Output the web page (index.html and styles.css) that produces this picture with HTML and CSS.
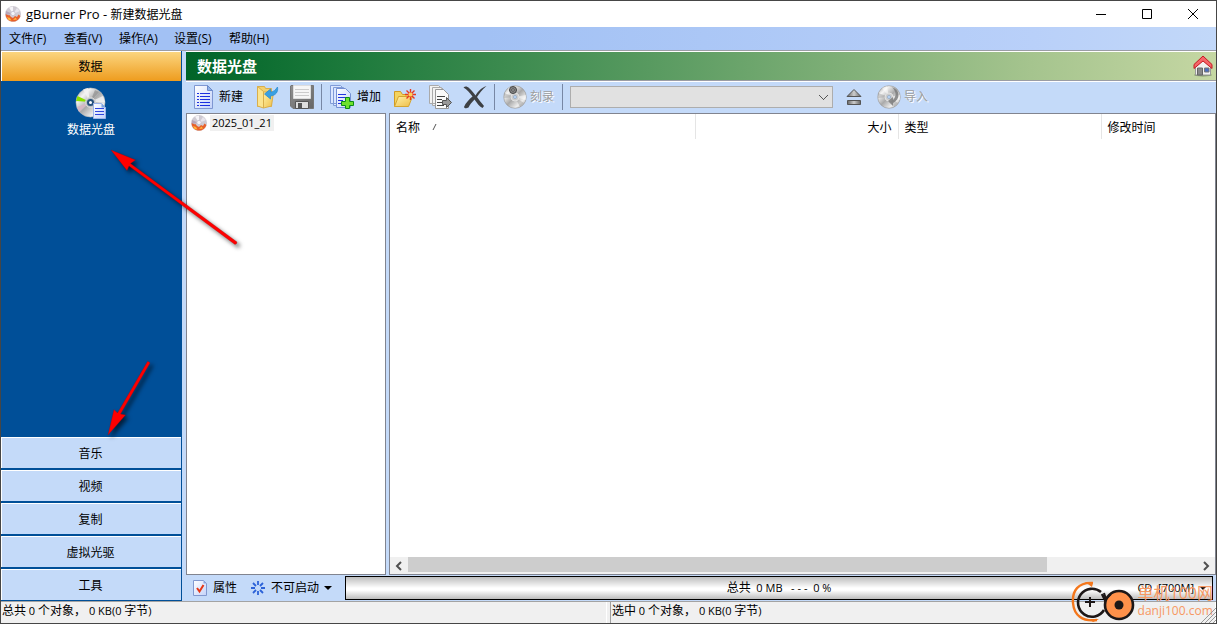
FILE: index.html
```html
<!DOCTYPE html>
<html lang="zh-CN">
<head>
<meta charset="utf-8">
<title>gBurner Pro - 新建数据光盘</title>
<link rel="stylesheet" href="styles.css">
</head>
<body>
<svg class="defs" aria-hidden="true">
  <defs>
    <linearGradient id="silver" x1="0" y1="0" x2="1" y2="1"><stop offset="0" stop-color="#999"/><stop offset=".25" stop-color="#f4f4f4"/><stop offset=".5" stop-color="#aaa"/><stop offset=".75" stop-color="#eee"/><stop offset="1" stop-color="#888"/></linearGradient>
    <linearGradient id="gold" x1="0" y1="0" x2="1" y2="1"><stop offset="0" stop-color="#fff2a8"/><stop offset="1" stop-color="#eebc45"/></linearGradient>
    <linearGradient id="paper" x1="0" y1="0" x2="1" y2="1"><stop offset="0" stop-color="#fff"/><stop offset="1" stop-color="#c3d2fa"/></linearGradient>
    <linearGradient id="metal" x1="0" y1="0" x2="1" y2="0"><stop offset="0" stop-color="#666"/><stop offset=".5" stop-color="#ccc"/><stop offset="1" stop-color="#666"/></linearGradient>
    <linearGradient id="cover" x1="0" y1="0" x2="1" y2="1"><stop offset="0" stop-color="#909090"/><stop offset="1" stop-color="#666"/></linearGradient>
    <symbol id="burn" viewBox="0 0 16 16">
      <circle cx="8" cy="8" r="7.600" fill="#cfcbd3" stroke="#c3bec8" stroke-width=".6"/>
      <path d="M8 8 4 1.600 8 .6z" fill="#f6f4f8"/><path d="M8 8 12 2l3 3z" fill="#e8e5ec"/>
      <path d="M8 8 1 5v4z" fill="#b7a5b8"/>
      <path d="M.6 8.500C1 7.500 3 10 4.500 9l1.500 2 2 1 2-2 2 1 1.500-2.500L15.400 10C14.500 13 12 15.600 8 15.600S1 13 .6 8.500z" fill="#e8602a"/>
      <path d="M2 11l3 1 1.500 2.500-3-.5zM8 14l2.500-2.500 1.500 2z" fill="#ffb83b"/>
      <circle cx="8" cy="7.500" r="2.200" fill="#f4f4f8" stroke="#c4bfcd" stroke-width=".8"/>
    </symbol>
    <symbol id="page" viewBox="0 0 24 24">
      <path d="M2.500.5h13l5 5v18h-18z" fill="url(#paper)" stroke="#7f97d2"/>
      <path d="M15.500.500v5h5z" fill="#8fb3e8" stroke="#6c8acb"/>
      <path d="M5 8.500h2m1 0h10M5 11.500h2m1 0h10M5 14.500h2m1 0h10M5 17.500h2m1 0h10M5 20.500h2m1 0h10" stroke="#1c2fe0" fill="none"/>
    </symbol>
    <symbol id="disc" viewBox="0 0 24 24">
      <circle cx="12" cy="12" r="11.300" fill="url(#silver)" stroke="#949494" stroke-width=".6"/>
      <path d="M12 12 5 3l5-2zM12 12l11-2v5z" fill="#fff" opacity=".5"/>
      <path d="M12 12 1 8v5zM12 12l5 10 4-4z" fill="#888" opacity=".35"/>
      <circle cx="12" cy="12" r="4" fill="#ccc" stroke="#e2e2e2"/><circle cx="12" cy="12" r="1.600" fill="#b9d4f5" stroke="#8aa2c0" stroke-width=".6"/>
    </symbol>
  </defs>
</svg>
<div class="window">
  <header class="titlebar">
    <svg class="icon16"><use href="#burn"/></svg>
    <h1 class="title"><span class="app-name">gBurner Pro - </span>新建数据光盘</h1>
    <div class="captions">
      <button class="caption" aria-label="最小化"><svg viewBox="0 0 12 12"><path d="M1 6.500h10" /></svg></button>
      <button class="caption" aria-label="最大化"><svg viewBox="0 0 12 12"><path d="M1.500 1.500h9v9h-9z"/></svg></button>
      <button class="caption" aria-label="关闭"><svg viewBox="0 0 12 12"><path d="M1 1l10 10M11 1 1 11"/></svg></button>
    </div>
  </header>
  <nav class="menubar">
    <button class="menu">文件(F)</button><button class="menu">查看(V)</button><button class="menu">操作(A)</button><button class="menu">设置(S)</button><button class="menu">帮助(H)</button>
  </nav>
  <div class="body">
    <aside class="sidebar">
      <button class="group active">数据</button>
      <div class="group-panel">
        <button class="launcher">
          <svg viewBox="0 0 32 32">
            <circle cx="15.500" cy="15.500" r="14.500" fill="url(#silver)" stroke="#bbb" stroke-width=".6"/>
            <path d="M15 15 8 2.500l5-1.500zM15 15 28 9l2 6z" fill="#f4f4f4" opacity=".8"/>
            <path d="M15 15 2.500 9 1 14z" fill="#8be000"/><path d="M15 15 4 25 2 20z" fill="#d5b7c4"/><path d="M15 15 20 3l4 2z" fill="#888" opacity=".6"/>
            <circle cx="15.500" cy="15.500" r="5" fill="#b8bcc2" stroke="#d8d8d8"/><circle cx="15.500" cy="15.500" r="2.500" fill="#fff" stroke="#24507c" stroke-width="2"/>
            <path d="M18.500 16.500h8l4 4v11h-12z" fill="url(#paper)" stroke="#9db4ea"/><path d="M26.500 16.500v4h4z" fill="#7ba4df"/>
            <path d="M20 21.500h9M20 24.500h9M20 27.500h9" stroke="#3046dd"/>
          </svg>
          <span>数据光盘</span>
        </button>
      </div>
      <button class="group">音乐</button>
      <button class="group">视频</button>
      <button class="group">复制</button>
      <button class="group">虚拟光驱</button>
      <button class="group">工具</button>
    </aside>
    <main class="work">
      <div class="heading">
        <h2>数据光盘</h2>
        <button class="home" aria-label="主页"><svg viewBox="0 0 20 22">
          <ellipse cx="10" cy="20" rx="9" ry="1.500" fill="#557044" opacity=".6"/>
          <path d="M2.500 11l7.500-7 7.500 7v9h-15z" fill="#f1f1f1" stroke="#999"/>
          <path d="M4.500 13h5v7h-5z" fill="#888" stroke="#666"/><path d="M11.500 13h4.500v4h-4.500z" fill="#4b6fc0" stroke="#777"/>
          <path d="M10 1 1 9.500v4L10 6l9 7.500v-4z" fill="#f56468" stroke="#c41820"/>
        </svg></button>
      </div>
      <div class="toolbar">
        <button class="tool labelled"><svg><use href="#page"/></svg>新建</button>
        <button class="tool" aria-label="打开"><svg viewBox="0 0 24 24">
          <path d="M2.500 1.500h7l1 2h6v18h-14z" fill="#f3d16f" stroke="#d9ae4b"/><path d="M2.500 1.500l6 5v16.500l-6-2z" fill="#fbe48f" stroke="#d9ae4b"/><path d="M8.500 7h10l-2 14-8 2z" fill="url(#gold)" stroke="#d9ae4b"/>
          <path d="M22.500 2c1 5-2 8.500-7 9v3l-6-5 6-5v3c3 0 5-2 7-5z" fill="#39a0e2" stroke="#2587cf" stroke-width=".7"/>
        </svg></button>
        <button class="tool" aria-label="保存"><svg viewBox="0 0 24 24">
          <path d="M1 .5h22.500v23H3L.5 21V1z" fill="url(#cover)" stroke="#777"/><path d="M3.500.5h17v13h-17z" fill="#f6f6f6" stroke="#ddd"/>
          <path d="M5 4.500h14M5 7.500h14M5 10.500h14" stroke="#ccc"/><path d="M5.500 16.500h13v7h-13z" fill="#ddd" stroke="#555"/><path d="M8 18h4v5H8z" fill="#555"/>
        </svg></button>
        <span class="sep"></span>
        <button class="tool labelled"><svg viewBox="0 0 24 24">
          <path d="M.5.5h10l4 4v14H.5zM3.500 2.500h10l4 4v14h-14z" fill="#dbe7ff" stroke="#809bd7"/><path d="M6.500 3.500h9l5 5v14h-14z" fill="url(#paper)" stroke="#7490d5"/>
          <path d="M8 9.500h8M8 12.500h8M8 15.500h5M8 18.500h4" stroke="#2236e0"/>
          <path d="M15.500 12.500h4v4h4v4h-4v3h-4v-3h-4v-4h4z" fill="#6ee12d" stroke="#0c8c16"/>
        </svg>增加</button>
        <button class="tool" aria-label="新建文件夹"><svg viewBox="0 0 24 24">
          <path d="M1.500 21.500v-15h6l2 3h9v4" fill="#f4d35f" stroke="#d19b23"/><path d="M1.500 21.500l4-10h14l-4 10z" fill="url(#gold)" stroke="#d5a530"/>
          <path d="M17.500 4v11M12 9.500h11M13.500 5.500l8 8M21.500 5.500l-8 8" stroke="#e83a1f" stroke-width="1.400"/><circle cx="17.500" cy="9.500" r="2" fill="#ffd05a"/>
        </svg></button>
        <button class="tool" aria-label="提取"><svg viewBox="0 0 24 24">
          <path d="M1.500.5h9l3 3v15h-12zM4.500 2.500h9l4 4v14h-13z" fill="#f2f2f2" stroke="#aaa"/><path d="M7.500 4.500h8l5 5v14h-13z" fill="#fafafa" stroke="#999"/>
          <path d="M9 11.500h8M9 14.500h5M9 17.500h5M9 20.500h7" stroke="#444"/><path d="M14.500 15.500h4v-3l5 5-5 5v-3h-4z" fill="#999" stroke="#555"/>
        </svg></button>
        <button class="tool" aria-label="删除"><svg viewBox="0 0 24 24">
          <path d="M.5 2.500C2 1 4 1 6 3c3 3 5 5 6.500 7.500C15 6.500 18 3 23.500 1 19 5 16.500 8 14 12c2.500 3.500 4.500 6 7 9l-1.500 2c-3.500-1.500-5.500-5-8-8.500C9 17 7 19.500 5.500 22.500 3 24 1 23 1 22c1.500-4 5-7.500 8.500-10.500C7 8 4 4.500.5 2.500z" fill="#3d4044"/>
        </svg></button>
        <span class="sep"></span>
        <button class="tool labelled" disabled><svg viewBox="0 0 24 24"><use href="#disc"/><circle cx="10" cy="5" r="3.500" fill="#888" stroke="#444"/><circle cx="10" cy="5" r="1.200" fill="#fff" stroke="#222" stroke-width=".8"/></svg>刻录</button>
        <span class="sep"></span>
        <select class="drive" aria-label="光驱" disabled><option></option></select>
        <button class="tool" aria-label="弹出"><svg viewBox="0 0 24 24">
          <path d="M12 4.500 19 11.500H5z" fill="url(#metal)" stroke="#555"/><path d="M5.500 15.500h13v4h-13z" fill="url(#metal)" stroke="#555"/>
        </svg></button>
        <button class="tool labelled" disabled><svg viewBox="0 0 24 24"><use href="#disc"/><path d="M15 2c8 3 9 12 1 16v3l-5-5 5-4v3c4-4 3-9-1-13z" fill="#777" opacity=".8"/></svg>导入</button>
      </div>
      <div class="panes">
        <section class="tree">
          <button class="node"><svg class="icon16"><use href="#burn"/></svg><span class="node-name">2025_01_21</span></button>
        </section>
        <section class="list">
          <table class="columns">
            <thead><tr>
              <th class="col-name" scope="col">名称<svg class="sort" viewBox="0 0 6 6"><path d="M1 6 4 0"/></svg></th>
              <th class="col-size" scope="col">大小</th>
              <th class="col-type" scope="col">类型</th>
              <th scope="col">修改时间</th>
            </tr></thead>
          </table>
          <div class="scrollbar">
            <button class="arrow" aria-label="向左"><svg viewBox="0 0 8 10"><path d="M6 1 2 5l4 4"/></svg></button>
            <div class="track"><div class="thumb"></div></div>
            <button class="arrow" aria-label="向右"><svg viewBox="0 0 8 10"><path d="M2 1l4 4-4 4"/></svg></button>
          </div>
        </section>
      </div>
      <div class="disc-bar">
        <button class="option"><svg viewBox="0 0 16 16">
          <path d="M1.500.5h10l3 3v12h-13z" fill="url(#paper)" stroke="#8198cf"/><path d="M11.500.5v3h3z" fill="#8aa6df"/><path d="M5 8l2.500 3.500L11.500 5" fill="none" stroke="#e53716" stroke-width="2"/>
        </svg>属性</button>
        <button class="option"><svg viewBox="0 0 16 16">
          <path d="M8 1v4M8 11v4M1 8h4M11 8h4M3 3l3 3M10 10l3 3M13 3l-3 3M6 10l-3 3" stroke="#2c62d8" stroke-width="1.800"/>
        </svg>不可启动<span class="caret"></span></button>
        <div class="capacity">
          <span class="usage"><span class="usage-label">总共</span>&nbsp; 0 MB &nbsp; - - - &nbsp;0 %</span>
          <button class="media">CD&nbsp; [700M]<span class="caret"></span></button>
        </div>
      </div>
    </main>
  </div>
  <footer class="status">
    <div class="cell"><span class="cjk">总共</span> 0 <span class="cjk">个对象，</span> 0 KB(0 <span class="cjk">字节</span>)</div>
    <div class="cell"><span class="cjk">选中</span> 0 <span class="cjk">个对象，</span> 0 KB(0 <span class="cjk">字节</span>)</div>
  </footer>
  <svg class="pointers" viewBox="0 0 260 440" aria-hidden="true">
    <g fill="#f00" stroke="#a00000" stroke-width=".3">
      <path d="M111 150l24.500 10-5 3.500L237 242q0 2-2 2.500L129 166l-2 4.500z"/>
      <path d="M108 435l6-25.500 3.500 3.500L147.500 361.500q2 0 2.500 1.500L120.500 414l5 1z"/>
    </g>
  </svg>
  <div class="watermark">
    <svg viewBox="0 0 66 42" aria-hidden="true">
      <path d="M22 2C7 1 1 10 2 22s9 19 24 17" fill="none" stroke="#f4771c" stroke-width="2.400"/>
      <path d="M22 2l-8-1 7 5zM19 38h9l-6 3z" fill="#f4771c"/>
      <path d="M30 11a14 14 0 1 0 3 18M31 13l4 8" fill="none" stroke="#1d1717" stroke-width="2.600"/>
      <path d="M14 21h10M19 16v10" stroke="#1d1717" stroke-width="2"/>
      <circle cx="48" cy="24" r="14" fill="#ff914a" stroke="#1d1717" stroke-width="2.600"/><path d="M33 12l2 6 5-5" fill="none" stroke="#1d1717" stroke-width="2"/><circle cx="48" cy="24" r="4.500" fill="#1d1717"/>
    </svg>
    <div class="mark-text"><span class="mark-name">单机100网</span><span class="mark-url">danji100.com</span></div>
  </div>
  <svg class="grip" viewBox="0 0 16 16" aria-hidden="true"><path d="M1 16 16 1M5 16 16 5M9 16l7-7M13 16l3-3" stroke="#999"/></svg>
</div>
</body>
</html>
```
FILE: styles.css
```css
* { box-sizing: border-box; }

body {
  margin: 0;
  font: 12px/16px "Open Sans", "Noto Sans CJK SC", sans-serif;
  color: #000;
}

button, select {
  font: inherit;
  color: inherit;
  background: none;
  border: 0;
  border-radius: 0;
  margin: 0;
  padding: 0;
}

h1, h2 { margin: 0; font: inherit; }
svg { display: block; flex: none; }
.defs { position: absolute; width: 0; height: 0; }
.icon16 { width: 16px; height: 16px; }

.window {
  position: relative;
  display: flex;
  flex-direction: column;
  height: 100vh;
  border: 1px solid #464646;
  background: #c4daf9;
  overflow: hidden;
}

/* Title and menus */
.titlebar {
  display: flex;
  align-items: center;
  height: 26px;
  padding-left: 4px;
  gap: 5px;
  background: #fff;
}
.app-name { font-size: 13px; white-space: pre; }
.captions { display: flex; margin-left: auto; }
.caption {
  display: flex;
  align-items: center;
  justify-content: center;
  width: 46px;
  height: 26px;
}
.caption svg { width: 12px; height: 12px; fill: none; stroke: #000; }
.menubar {
  display: flex;
  height: 24px;
  padding-left: 2px;
  background: linear-gradient(90deg, #a2c1f4 40%, #b9d0f9 85%, #c2d8f9);
  border-bottom: 1px solid #9b9da5;
}
.menu { width: 55px; text-align: left; padding-left: 6px; white-space: nowrap; }

.body { display: flex; flex: 1; min-height: 0; }

/* Sidebar */
.sidebar {
  display: flex;
  flex-direction: column;
  gap: 2px;
  width: 181px;
  background: #004f98;
  padding: 0 1px 1px 0;
}
.group {
  height: 31px;
  padding: 1px 2px 0 0;
  background: #c4daf9;
  border-top: 1px solid #fff;
  border-left: 1px solid #fff;
}
.group.active {
  height: 30px;
  background: linear-gradient(#fbd57f, #ee9c1e);
  margin-bottom: -2px;
}
.group-panel { flex: 1; margin-bottom: -2px; padding-top: 6px; text-align: center; }
.launcher {
  display: inline-flex;
  flex-direction: column;
  align-items: center;
  gap: 3px;
  color: #fff;
}
.launcher svg { width: 32px; height: 32px; }

/* Work area */
.work {
  display: flex;
  flex-direction: column;
  flex: 1;
  min-width: 0;
  margin-left: 4px;
}
.heading {
  display: flex;
  align-items: center;
  justify-content: space-between;
  height: 30px;
  padding: 0 3px 0 11px;
  border-top: 1px solid #fff;
  border-bottom: 1px solid #9b9da5;
  background: linear-gradient(90deg, #006428, #1d7a3c 16%, #589a60 45%, #a5c48e 82%, #c5d7a3);
}
.heading h2 { font-size: 15px; font-weight: 700; color: #fff; }
.home svg { width: 20px; height: 22px; }
.toolbar {
  display: flex;
  align-items: center;
  gap: 1px;
  height: 32px;
  padding: 0 0 1px 1px;
  border-top: 1px solid #fff;
}
.tool {
  display: flex;
  align-items: center;
  gap: 3px;
  padding: 0 5px;
  white-space: nowrap;
}
.tool svg { width: 24px; height: 24px; }
.labelled { padding-right: 6px; }
.tool:disabled { color: #9d9d9d; text-shadow: 1px 1px #fff; }
.sep { width: 1px; height: 26px; margin: 0 2px 0 1px; background: #7787a5; }
.drive {
  appearance: none;
  width: 263px;
  height: 22px;
  margin: 0 3px 0 4px;
  opacity: 1;
  border: 1px solid #adadad;
  background:
    linear-gradient(45deg, transparent 42%, #555 42% 60%, transparent 60%) right 8px center / 5px 5px no-repeat,
    linear-gradient(-45deg, transparent 42%, #555 42% 60%, transparent 60%) right 4px center / 5px 5px no-repeat,
    #e1e1e1;
}

.panes { display: flex; flex: 1; gap: 3px; min-height: 0; }
.tree, .list { background: #fff; border: 1px solid #81848f; }
.tree { width: 200px; }
.node { display: flex; align-items: center; gap: 3px; padding: 1px 4px; }
.node-name { padding: 0 2px; background: #f0f0f0; font-size: 11px; }
.list { display: flex; flex-direction: column; justify-content: space-between; flex: 1; min-width: 0; }
.columns { width: 100%; table-layout: fixed; border-collapse: collapse; }
.columns th {
  height: 25px;
  padding: 2px 6px 0;
  text-align: left;
  font-weight: 400;
  border-right: 1px solid #e5e5e5;
}
.columns th:last-child { border-right: 0; }
.columns .col-name { width: 305px; }
.columns .col-size { width: 203px; text-align: right; }
.columns .col-type { width: 203px; }
.sort { display: inline-block; width: 6px; height: 6px; margin: 0 0 2px 12px; stroke: #555; }
.scrollbar { display: flex; height: 17px; background: #f0f0f0; }
.arrow { display: flex; align-items: center; justify-content: center; width: 18px; }
.arrow svg { width: 8px; height: 10px; fill: none; stroke: #505050; stroke-width: 2; }
.track { flex: 1; }
.thumb { width: 81%; height: 15px; background: #cdcdcd; }

.disc-bar { display: flex; align-items: center; height: 26px; padding: 0 3px 0 6px; }
.option { display: flex; align-items: center; gap: 5px; margin-right: 13px; white-space: nowrap; }
.option svg { width: 16px; height: 16px; }
.caret {
  width: 0;
  height: 0;
  border: 4px solid transparent;
  border-top-color: #000;
  border-bottom: 0;
}
.capacity {
  display: grid;
  grid-template-columns: 1fr auto 1fr;
  align-items: center;
  flex: 1;
  height: 24px;
  border: 1px solid #000;
  background: linear-gradient(#bdbdbd, #fff 50%, #fff 60%, #bdbdbd);
}
.usage { grid-column: 2; font-size: 11px; }
.usage-label { font-size: 12px; }
.media {
  display: flex;
  align-items: center;
  justify-self: end;
  gap: 5px;
  padding-right: 5px;
  font-size: 11px;
}

.status {
  display: grid;
  grid-template-columns: 1fr 1fr;
  gap: 3px;
  height: 22px;
  background: #f0f0f0;
  border-top: 1px solid #a3a3a3;
}
.cell {
  padding: 0 1px;
  border-right: 1px solid #fff;
  border-left: 1px solid #a0a0a0;
  font-size: 11px;
  line-height: 18px;
}
.cell:first-child { border-left: 0; }
.cjk { font-size: 12px; }

/* Layers over the window */
.pointers {
  position: absolute;
  left: -1px;
  top: -1px;
  width: 260px;
  height: 440px;
  overflow: visible;
  pointer-events: none;
  filter: drop-shadow(3px 3px 2px #0009);
}
.watermark {
  position: absolute;
  right: 3px;
  bottom: 0;
  display: flex;
  align-items: center;
  gap: 1px;
  color: #f79862;
  pointer-events: none;
}
.watermark svg { width: 66px; height: 42px; }
.mark-text { display: flex; flex-direction: column; }
.mark-name { font-size: 16px; line-height: 18px; }
.mark-url { font-size: 12px; line-height: 18px; }
.grip { position: absolute; right: 0; bottom: 0; width: 16px; height: 16px; }
```
